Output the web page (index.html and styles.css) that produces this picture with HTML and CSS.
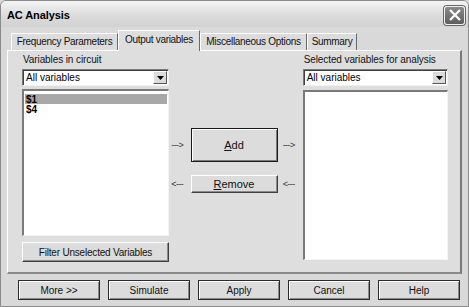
FILE: index.html
```html
<!DOCTYPE html>
<html>
<head>
<meta charset="utf-8">
<link rel="stylesheet" href="styles.css">
</head>
<body>
<div class="window">
  <div class="titlebar">
    <span class="title">AC Analysis</span>
    <span class="close"><svg width="14" height="12" viewBox="0 0 14 12"><path d="M2 1 L12 11 M12 1 L2 11" stroke="#fff" stroke-width="2.2" fill="none"/></svg></span>
  </div>
  <div class="body">
    <div class="tabs">
      <div class="tab t1">Frequency Parameters</div>
      <div class="tab t2 active">Output variables</div>
      <div class="tab t3">Miscellaneous Options</div>
      <div class="tab t4">Summary</div>
    </div>
    <div class="panel">
      <div class="col left">
        <div class="label">Variables in circuit</div>
        <div class="combo"><span class="val">All variables</span><span class="arrow"><svg width="7" height="4" viewBox="0 0 7 4"><path d="M0 0 H7 L3.5 4 Z" fill="#000"/></svg></span></div>
        <div class="list list-left">
          <div class="item sel">$1</div>
          <div class="item">$4</div>
        </div>
        <div class="btn filter">Filter Unselected Variables</div>
      </div>
      <div class="col mid">
        <div class="row add-row">
          <span class="arr">---&gt;</span>
          <div class="btn add"><u>A</u>dd</div>
          <span class="arr">---&gt;</span>
        </div>
        <div class="row rem-row">
          <span class="arr">&lt;---</span>
          <div class="btn remove"><u>R</u>emove</div>
          <span class="arr">&lt;---</span>
        </div>
      </div>
      <div class="col right">
        <div class="label">Selected variables for analysis</div>
        <div class="combo"><span class="val">All variables</span><span class="arrow"><svg width="7" height="4" viewBox="0 0 7 4"><path d="M0 0 H7 L3.5 4 Z" fill="#000"/></svg></span></div>
        <div class="list list-right"></div>
      </div>
    </div>
    <div class="buttons">
      <div class="btn bb">More &gt;&gt;</div>
      <div class="btn bb">Simulate</div>
      <div class="btn bb">Apply</div>
      <div class="btn bb">Cancel</div>
      <div class="btn bb">Help</div>
    </div>
  </div>
</div>
</body>
</html>
```

FILE: styles.css
```css
* { box-sizing: border-box; }
html, body { margin: 0; padding: 0; background: #d9d9d9; }
body {
  font-family: "Liberation Sans", Arial, sans-serif;
  font-size: 10px;
  color: #000;
}
.window {
  width: 469px;
  height: 307px;
  border: 1px solid #8a8a8a;
  border-radius: 6px 6px 0 0;
  background: #d9d9d9;
  display: flex;
  flex-direction: column;
  overflow: hidden;
}
.titlebar {
  height: 26px;
  flex: none;
  background: linear-gradient(#f4f4f4, #dadada 60%, #d2d2d2);
  display: flex;
  align-items: center;
  justify-content: space-between;
  padding: 0 3px 0 6px;
}
.title {
  font-weight: bold;
  font-size: 11px;
  letter-spacing: -0.1px;
  margin-top: 1px;
}
.close {
  width: 21px;
  height: 19px;
  margin-top: 2px;
  border-radius: 3px;
  background: linear-gradient(#8a8a8a, #5e5e5e);
  border: 1px solid #f0f0f0;
  box-shadow: 0 0 0 1px #666;
  display: flex;
  align-items: center;
  justify-content: center;
}
.body {
  flex: 1;
  display: flex;
  flex-direction: column;
  padding: 0 6px 0 6px;
}
.tabs {
  display: flex;
  align-items: flex-end;
  height: 23px;
  margin-left: 4px;
  position: relative;
  z-index: 1;
}
.tab {
  height: 17px;
  line-height: 15px;
  text-align: center;
  border-top: 1px solid #fff;
  border-left: 1px solid #fff;
  border-right: 1px solid #6a6a6a;
  background: #dcdcdc;
  letter-spacing: -0.3px;
  color: #111;
}
.t1 { width: 107px; }
.t2 { width: 82px; }
.t3 { width: 107px; }
.t4 { width: 50px; }
.tab.active {
  height: 21px;
  line-height: 17px;
  margin-bottom: -1px;
  background: #dedede;
}
.panel {
  height: 224px;
  flex: none;
  background: #dedede;
  border-top: 1px solid #fff;
  border-left: 1px solid #fff;
  border-right: 2px solid #7a7a7a;
  border-bottom: 2px solid #8a8a8a;
  display: flex;
  padding: 2px 12px 0 14px;
}
.col { display: flex; flex-direction: column; }
.left { width: 148px; }
.right { width: 146px; margin-left: 6px; padding-bottom: 12px; }
.mid { width: 126px; padding-top: 75px; margin-left: 2px; }
.label {
  height: 13px;
  line-height: 13px;
  margin-left: 1px;
  letter-spacing: -0.1px;
  color: #111;
}
.combo {
  margin-top: 3px;
  height: 17px;
  background: #fff;
  border-top: 1px solid #7a7a7a;
  border-left: 1px solid #7a7a7a;
  border-right: 1px solid #f0f0f0;
  border-bottom: 1px solid #f0f0f0;
  box-shadow: inset 1px 1px 0 #404040;
  display: flex;
  align-items: center;
  justify-content: space-between;
  padding: 0 1px 0 3px;
}
.arrow {
  width: 14px;
  height: 13px;
  background: #dcdcdc;
  border-top: 1px solid #fff;
  border-left: 1px solid #fff;
  border-right: 1px solid #555;
  border-bottom: 1px solid #555;
  display: flex;
  align-items: center;
  justify-content: center;
}
.list {
  margin-top: 3px;
  background: #fff;
  border-top: 2px solid #7a7a7a;
  border-left: 2px solid #7a7a7a;
  border-right: 1px solid #f4f4f4;
  border-bottom: 1px solid #f4f4f4;
  padding: 3px 1px 2px;
}
.list-left { height: 147px; }
.list-right { flex: 1; margin-top: 4px; }
.item { height: 10px; line-height: 11px; padding-left: 1px; font-weight: bold; font-size: 10px; }
.item.sel { background: #a8a8a8; }
.btn {
  background: #dcdcdc;
  border-top: 1px solid #fff;
  border-left: 1px solid #fff;
  border-right: 1px solid #404040;
  border-bottom: 1px solid #404040;
  box-shadow: inset -1px -1px 0 #8a8a8a;
  display: flex;
  align-items: center;
  justify-content: center;
  color: #111;
}
.filter {
  margin-top: 6px;
  height: 20px;
  width: 147px;
  letter-spacing: -0.2px;
}
.row { display: flex; align-items: center; justify-content: space-between; }
.arr { font-size: 9px; color: #333; letter-spacing: -0.6px; width: 14px; }
.add {
  width: 87px;
  height: 34px;
  border: 1px solid #1a1a1a;
  box-shadow: inset 1px 1px 0 #fff, inset -1px -1px 0 #7a7a7a;
  font-size: 11px;
}
.rem-row { margin-top: 13px; }
.remove {
  width: 87px;
  height: 18px;
  font-size: 11px;
}
.buttons {
  display: flex;
  gap: 8px;
  margin-top: 6px;
  margin-left: 11px;
}
.bb {
  width: 82px;
  height: 20px;
  border: 1px solid #2a2a2a;
  box-shadow: inset 1px 1px 0 #fff, inset -1px -1px 0 #8a8a8a;
  font-size: 10px;
}
```
